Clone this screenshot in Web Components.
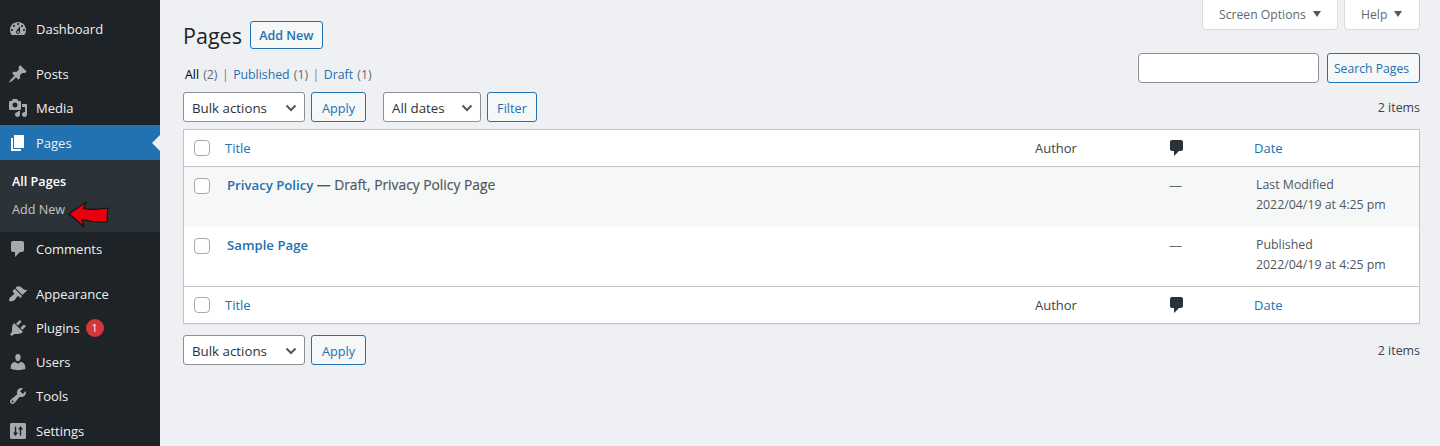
<!DOCTYPE html>
<html lang="en">
<head>
<meta charset="utf-8">
<title>Pages</title>
<style>
  html, body { margin: 0; height: 446px; overflow: hidden; }
  body { background: #eff0f3; color: #3c434a; font: 13px/20px "Open Sans", "Liberation Sans", sans-serif; display: flex; }
  wp-table-row b { color: #2271b1; font-weight: 600; }
  wp-table-row strong { color: #50575e; font-weight: 400; font-size: 13.8px; -webkit-text-stroke: .2px #50575e; }
</style>
</head>
<body>
<wp-sidebar>
  <wp-menu-item icon="dashboard" style="margin-top:12px">Dashboard</wp-menu-item>
  <wp-menu-item icon="post" style="margin-top:11px">Posts</wp-menu-item>
  <wp-menu-item icon="media">Media</wp-menu-item>
  <wp-menu-item icon="page" current>Pages</wp-menu-item>
  <wp-submenu>
    <wp-sub-item current>All Pages</wp-sub-item>
    <wp-sub-item>Add New</wp-sub-item>
  </wp-submenu>
  <wp-menu-item icon="comments">Comments</wp-menu-item>
  <wp-menu-item icon="appearance" style="margin-top:11px">Appearance</wp-menu-item>
  <wp-menu-item icon="plugins" count="1">Plugins</wp-menu-item>
  <wp-menu-item icon="users">Users</wp-menu-item>
  <wp-menu-item icon="tools">Tools</wp-menu-item>
  <wp-menu-item icon="settings" style="margin-top:1px">Settings</wp-menu-item>
</wp-sidebar>

<wp-main>
  <wp-page-top>
    <wp-heading slot="left">Pages</wp-heading>
    <wp-views slot="left"></wp-views>
    <wp-help-tab slot="right" width="136">Screen Options</wp-help-tab>
    <wp-help-tab slot="right" width="76">Help</wp-help-tab>
    <wp-search slot="search"></wp-search>
  </wp-page-top>

  <wp-tablenav>
    <wp-select width="122">Bulk actions</wp-select>
    <wp-button width="55">Apply</wp-button>
    <wp-select width="98" style="margin-left:11px">All dates</wp-select>
    <wp-button width="50">Filter</wp-button>
  </wp-tablenav>

  <wp-table>
    <wp-table-row kind="head">
      <span slot="title">Title</span>
      <span slot="author">Author</span>
      <span slot="date">Date</span>
    </wp-table-row>
    <wp-table-row kind="body" alt>
      <span slot="title"><b>Privacy Policy</b> <strong>— Draft, Privacy Policy Page</strong></span>
      <span slot="date">Last Modified<br>2022/04/19 at 4:25 pm</span>
    </wp-table-row>
    <wp-table-row kind="body" style="height:59px">
      <span slot="title"><b>Sample Page</b></span>
      <span slot="date">Published<br>2022/04/19 at 4:25 pm</span>
    </wp-table-row>
    <wp-table-row kind="foot">
      <span slot="title">Title</span>
      <span slot="author">Author</span>
      <span slot="date">Date</span>
    </wp-table-row>
  </wp-table>

  <wp-tablenav bottom>
    <wp-select width="122">Bulk actions</wp-select>
    <wp-button width="55">Apply</wp-button>
  </wp-tablenav>
</wp-main>

<script>
const ICONS = {
  dashboard: 'M3.76 16h12.48c1.1-1.37 1.76-3.11 1.76-5 0-4.42-3.58-8-8-8s-8 3.58-8 8c0 1.89.66 3.63 1.76 5zM10 4c.55 0 1 .45 1 1s-.45 1-1 1-1-.45-1-1 .45-1 1-1zM6 6c.55 0 1 .45 1 1s-.45 1-1 1-1-.45-1-1 .45-1 1-1zm8 0c.55 0 1 .45 1 1s-.45 1-1 1-1-.45-1-1 .45-1 1-1zm-5.37 5.55L12 7v6c0 1.1-.9 2-2 2s-2-.9-2-2c0-.57.24-1.08.63-1.45zM4 10c.55 0 1 .45 1 1s-.45 1-1 1-1-.45-1-1 .45-1 1-1zm12 0c.55 0 1 .45 1 1s-.45 1-1 1-1-.45-1-1 .45-1 1-1zm-5 3c0-.55-.45-1-1-1s-1 .45-1 1 .45 1 1 1 1-.45 1-1z',
  post: 'M10.44 3.02l1.82-1.82 6.36 6.35-1.83 1.82c-1.05-.68-2.48-.57-3.41.36l-.75.75c-.92.93-1.04 2.35-.35 3.41l-1.83 1.82-2.41-2.41-2.8 2.79c-.42.42-3.38 2.71-3.8 2.29s1.86-3.39 2.28-3.81l2.79-2.79L4.1 9.36l1.83-1.82c1.05.69 2.48.57 3.4-.36l.75-.75c.93-.92 1.05-2.35.36-3.41z',
  media: 'M13 11V4c0-.55-.45-1-1-1h-1.67L9 1H5L3.67 3H2c-.55 0-1 .45-1 1v7c0 .55.45 1 1 1h10c.55 0 1-.45 1-1zM7 4.5c1.38 0 2.5 1.12 2.5 2.5S8.38 9.5 7 9.5 4.5 8.38 4.5 7 5.62 4.5 7 4.5zM14 6h5v10.5c0 1.38-1.12 2.5-2.5 2.5S14 17.88 14 16.5s1.12-2.5 2.5-2.5c.17 0 .34.02.5.05V9h-3V6zm-4 8.05V13h2v3.5c0 1.38-1.12 2.5-2.5 2.5S7 17.88 7 16.5 8.12 14 9.5 14c.17 0 .34.02.5.05z',
  page: 'M6 15V2h10v13H6zm-1 1h8v2H3V5h2v11z',
  comments: 'M5 2h9c1.1 0 2 .9 2 2v7c0 1.1-.9 2-2 2h-2l-5 5v-5H5c-1.1 0-2-.9-2-2V4c0-1.1.9-2 2-2z',
  appearance: 'M14.48 11.06L7.41 3.99l1.5-1.5c.5-.56 2.3-.47 3.51.32 1.21.8 1.43 1.28 2.91 2.1 1.18.64 2.45 1.26 4.45.85zm-.71.71L6.7 4.7 4.93 6.47c-.39.39-.39 1.02 0 1.41l1.06 1.06c.39.39.39 1.03 0 1.42-.6.6-1.43 1.11-2.21 1.69-.35.26-.7.53-1.01.84C1.43 13.23.78 15.78 1.4 17.18c1.6.54 4.15-.1 5.47-1.42.31-.31.57-.66.84-1.01.58-.78 1.09-1.61 1.69-2.21.39-.39 1.03-.39 1.42 0l1.06 1.06c.39.39 1.02.39 1.41 0z',
  plugins: 'M13.11 4.36L9.87 7.6 8 5.73l3.24-3.24c.35-.34 1.05-.2 1.56.32.52.51.66 1.21.31 1.55zm-8 1.77l.91-1.12 9.01 9.01-1.19.84c-.71.71-2.63 1.16-3.82 1.16H6.14L4.9 17.26c-.59.59-1.54.59-2.12 0-.59-.58-.59-1.53 0-2.12l1.24-1.24v-3.88c0-1.13.4-3.19 1.09-3.89zm7.26 3.97l3.24-3.24c.34-.35 1.04-.21 1.55.31.52.51.66 1.21.31 1.55l-3.24 3.25z',
  users: 'M10 9.25c-2.27 0-2.73-3.44-2.73-3.44C7 4.02 7.82 2 9.97 2c2.16 0 2.98 2.02 2.71 3.81 0 0-.41 3.44-2.68 3.44zm0 2.57L12.72 10c2.39 0 4.52 2.33 4.52 4.53v2.49s-3.65 1.13-7.24 1.13c-3.65 0-7.24-1.13-7.24-1.13v-2.49c0-2.25 1.94-4.53 4.43-4.53z',
  tools: 'M16.68 9.77c-1.34 1.34-3.3 1.67-4.95.99l-5.41 6.52c-.99.99-2.59.99-3.58 0s-.99-2.59 0-3.57l6.52-5.42c-.68-1.65-.35-3.61.99-4.95 1.28-1.28 3.12-1.62 4.72-1.06l-2.89 2.89 2.82 2.82 2.86-2.87c.53 1.58.18 3.39-1.08 4.67zM3.81 16.21c.4.39 1.04.39 1.43 0 .4-.4.4-1.04 0-1.43-.39-.4-1.03-.4-1.43 0-.39.39-.39 1.03 0 1.43z',
  settings: 'M3.5 2h13c.8 0 1.5.7 1.5 1.5v13c0 .8-.7 1.5-1.5 1.5h-13c-.8 0-1.5-.7-1.5-1.5v-13C2 2.7 2.7 2 3.5 2zM6.8 5.5v6H5l2.5 3.5L10 11.5H8.2v-6zM13.2 14.5v-6H15L12.5 5 10 8.5h1.8v6z'
};

function icon(name, size) {
  return `<svg width="${size}" height="${size}" viewBox="0 0 20 20" fill="currentColor" fill-rule="evenodd" aria-hidden="true"><path d="${ICONS[name]}"/></svg>`;
}

// small helper, every element below is just markup + styles in an open shadow root
class Base extends HTMLElement {
  connectedCallback() {
    if (this.shadowRoot) return;
    this.attachShadow({ mode: 'open' });
    this.shadowRoot.innerHTML = this.render();
  }
}

class WpSidebar extends Base {
  render() {
    return `
      <style>
        :host { display: block; position: relative; flex: 0 0 160px; width: 160px; height: 446px; background: #1d2327; overflow: hidden; }
        .arrow { position: absolute; left: 66px; top: 200px; }
      </style>
      <slot></slot>
      <svg class="arrow" width="44" height="29" viewBox="0 0 44 29" aria-hidden="true">
        <path d="M3 14 C8 10 14 6 20 2 L17.5 8.5 C25 10.5 33 9 42 8 C41 12 41 17 41.5 21.5 C33 23 24 21.5 16 19.5 C16.5 22 17 24.5 18 27 C13 22.5 8 18 3 14Z" fill="#e8000f" stroke="#111" stroke-width="1.2" stroke-linejoin="round"/>
      </svg>`;
  }
}

class WpMenuItem extends Base {
  render() {
    const current = this.hasAttribute('current');
    const count = this.getAttribute('count');
    return `
      <style>
        :host { display: flex; align-items: center; height: ${current ? 35 : 34}px; color: #f0f0f1; position: relative; background: ${current ? '#2271b1' : 'transparent'}; font-size: 13px; }
        .ico { flex: 0 0 36px; display: flex; justify-content: center; color: ${current ? '#fff' : '#a7aaad'}; }
        .ico svg { display: block; margin-left: -1px; }
        .count { margin-left: 6px; width: 18px; height: 18px; border-radius: 50%; background: #d63638; color: #fff; font-size: 10px; line-height: 18px; text-align: center; }
        .tip { position: absolute; right: 0; top: 10px; width: 0; height: 0; border: 8px solid transparent; border-right-color: #eff0f3; border-left-width: 0; }
      </style>
      <span class="ico">${icon(this.getAttribute('icon'), 20)}</span>
      <span class="label"><slot></slot></span>
      ${count ? `<span class="count">${count}</span>` : ''}
      ${current ? '<span class="tip"></span>' : ''}`;
  }
}

class WpSubmenu extends Base {
  render() {
    return `
      <style>
        :host { display: flex; flex-direction: column; height: 72px; box-sizing: border-box; padding-top: 8px; background: #2c3338; }
      </style>
      <slot></slot>`;
  }
}

class WpSubItem extends Base {
  render() {
    const current = this.hasAttribute('current');
    return `
      <style>
        :host { display: block; height: 28px; line-height: 28px; padding-left: 12px; font-size: 12.6px; color: ${current ? '#fff' : '#c3c4c7'}; font-weight: ${current ? 600 : 400}; }
      </style>
      <slot></slot>`;
  }
}

class WpMain extends Base {
  render() {
    return `
      <style>
        :host { display: block; flex: 1; min-width: 0; padding: 0 20px 0 23px; }
      </style>
      <slot></slot>`;
  }
}

class WpPageTop extends Base {
  render() {
    return `
      <style>
        :host { display: flex; justify-content: space-between; height: 92px; }
        .left { display: flex; flex-direction: column; padding-top: 21px; }
        .right { display: flex; flex-direction: column; align-items: flex-end; }
        .tabs { display: flex; gap: 6px; }
        .search { margin-top: 23px; }
      </style>
      <div class="left"><slot name="left"></slot></div>
      <div class="right">
        <div class="tabs"><slot name="right"></slot></div>
        <div class="search"><slot name="search"></slot></div>
      </div>`;
  }
}

class WpHeading extends Base {
  render() {
    return `
      <style>
        :host { display: flex; align-items: center; gap: 8px; height: 28px; font-size: 21.5px; color: #1d2327; }
        .name { padding-top: 2px; }
        .add { display: flex; align-items: center; justify-content: center; width: 73px; height: 28px; box-sizing: border-box; padding-top: 1px; border: 1px solid #2271b1; border-radius: 3px; background: #f6f7f7; color: #2271b1; font-size: 12.5px; font-weight: 600; }
      </style>
      <span class="name"><slot></slot></span>
      <span class="add">Add New</span>`;
  }
}

class WpViews extends Base {
  render() {
    return `
      <style>
        :host { display: block; margin-top: 16px; padding-left: 2px; height: 20px; font-size: 12.3px; color: #50575e; white-space: nowrap; }
        b { font-weight: 400; color: #000; }
        a { color: #2271b1; }
        i { font-style: normal; color: #646970; margin-left: 1px; }
        .sep { color: #787c82; margin: 0 1.25px; }
      </style>
      <b>All</b> <i>(2)</i><span class="sep"> | </span><a>Published</a> <i>(1)</i><span class="sep"> | </span><a>Draft</a> <i>(1)</i>`;
  }
}

class WpHelpTab extends Base {
  render() {
    return `
      <style>
        :host { display: flex; align-items: center; gap: 7px; width: ${this.getAttribute('width')}px; height: 30px; box-sizing: border-box; padding-left: 16px; background: #fff; border: 1px solid #dcdcde; border-top: 0; border-radius: 0 0 4px 4px; font-size: 12.2px; color: #646970; }
        .caret { width: 0; height: 0; border: 4.5px solid transparent; border-top: 6px solid #50575e; border-bottom: 0; margin-top: -2px; }
      </style>
      <slot></slot><span class="caret"></span>`;
  }
}

class WpSearch extends Base {
  render() {
    return `
      <style>
        :host { display: flex; gap: 8px; height: 30px; }
        .box { width: 181px; box-sizing: border-box; background: #fff; border: 1px solid #8c8f94; border-radius: 4px; }
        wp-button { padding-right: 4px; }
      </style>
      <div class="box"></div>
      <wp-button width="93" small>Search Pages</wp-button>`;
  }
}

class WpTablenav extends Base {
  render() {
    const bottom = this.hasAttribute('bottom');
    return `
      <style>
        :host { display: flex; align-items: center; gap: 6px; height: 30px; margin: ${bottom ? '11px' : '0'} 0 ${bottom ? '0' : '7px'}; }
        .count { margin-left: auto; padding-top: 1px; font-size: 12.4px; color: #3c434a; }
      </style>
      <slot></slot>
      <span class="count">2 items</span>`;
  }
}

class WpButton extends Base {
  render() {
    return `
      <style>
        :host { display: inline-flex; align-items: center; justify-content: center; width: ${this.getAttribute('width')}px; height: 30px; box-sizing: border-box; padding-top: 1px; border: 1px solid #2271b1; border-radius: 3px; background: #f6f7f7; color: #2271b1; font-size: ${this.hasAttribute('small') ? 12.2 : 12.7}px; white-space: nowrap; }
      </style>
      <slot></slot>`;
  }
}

class WpSelect extends Base {
  render() {
    return `
      <style>
        :host { display: inline-flex; align-items: center; justify-content: space-between; width: ${this.getAttribute('width')}px; height: 30px; box-sizing: border-box; padding: 1px 7px 0 8px; border: 1px solid #8c8f94; border-radius: 3px; background: #fff; color: #2c3338; font-size: 13.3px; white-space: nowrap; }
        svg { display: block; }
      </style>
      <slot></slot>
      <svg width="12" height="8" viewBox="0 0 12 8" aria-hidden="true"><path d="M1.5 1.5 6 6l4.5-4.5" fill="none" stroke="#50575e" stroke-width="2"/></svg>`;
  }
}

class WpTable extends Base {
  render() {
    return `
      <style>
        :host { display: block; box-sizing: border-box; background: #fff; border: 1px solid #c3c4c7; box-shadow: 0 1px 1px rgba(0,0,0,.04); }
      </style>
      <slot></slot>`;
  }
}

class WpTableRow extends Base {
  render() {
    const kind = this.getAttribute('kind');
    const isBody = kind === 'body';
    const alt = this.hasAttribute('alt');
    const line = kind === 'head' ? 'border-bottom: 1px solid #c3c4c7;' : kind === 'foot' ? 'border-top: 1px solid #c3c4c7;' : '';
    return `
      <style>
        :host { display: grid; grid-template-columns: 43px 808px 135px 86px 1fr; align-items: ${isBody ? 'start' : 'center'}; height: ${isBody ? 60 : 37}px; box-sizing: border-box; padding-top: ${isBody ? 8 : 0}px; background: ${alt ? '#f6f7f7' : '#fff'}; ${line} font-size: 13px; color: #50575e; }
        .cb { width: 16px; height: 16px; margin: ${isBody ? '3px' : '0'} 0 0 10px; box-sizing: border-box; background: #fff; border: 1px solid #a7aaad; border-radius: 4px; }
        .title { font-size: ${isBody ? 13.2 : 13}px; color: ${isBody ? '#50575e' : '#2271b1'}; margin-left: ${isBody ? 0 : -2}px; }
        .author { color: #3c434a; }
        .cm { color: #2c3338; display: flex; margin-left: -3px; }
        .dash { color: #646970; margin-left: -1px; }
        .date { color: ${isBody ? '#50575e' : '#2271b1'}; margin-left: ${isBody ? 0 : -2}px; line-height: 20px; font-size: ${isBody ? 12.35 : 13}px; }
        ::slotted(*) { display: block; }
      </style>
      <span class="cb"></span>
      <span class="title"><slot name="title"></slot></span>
      <span class="author"><slot name="author"></slot></span>
      ${isBody ? '<span class="dash">—</span>' : `<span class="cm">${icon('comments', 20)}</span>`}
      <span class="date"><slot name="date"></slot></span>`;
  }
}

customElements.define('wp-sidebar', WpSidebar);
customElements.define('wp-menu-item', WpMenuItem);
customElements.define('wp-submenu', WpSubmenu);
customElements.define('wp-sub-item', WpSubItem);
customElements.define('wp-main', WpMain);
customElements.define('wp-page-top', WpPageTop);
customElements.define('wp-heading', WpHeading);
customElements.define('wp-views', WpViews);
customElements.define('wp-help-tab', WpHelpTab);
customElements.define('wp-search', WpSearch);
customElements.define('wp-tablenav', WpTablenav);
customElements.define('wp-button', WpButton);
customElements.define('wp-select', WpSelect);
customElements.define('wp-table', WpTable);
customElements.define('wp-table-row', WpTableRow);
</script>
</body>
</html>
